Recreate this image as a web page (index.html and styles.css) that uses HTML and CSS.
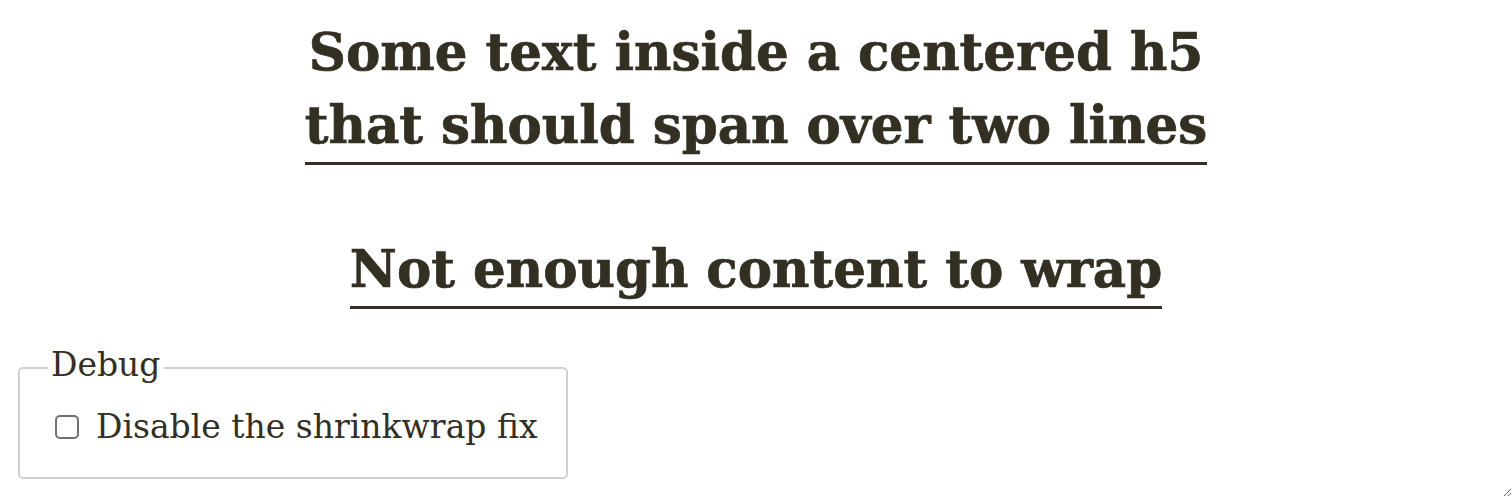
FILE: index.html
```html
<!DOCTYPE html>
<html>
<head>
<meta charset="utf-8">
<link rel="stylesheet" href="styles.css">
</head>
<body>
<div class="frame">
  <h5 class="title">Some text inside a centered h5<br>that should span over two lines</h5>
  <h5 class="title title-short">Not enough content to wrap</h5>
  <fieldset class="debug">
    <legend class="debug-legend">Debug</legend>
    <label class="debug-option"><input type="checkbox" class="debug-check"> Disable the shrinkwrap fix</label>
  </fieldset>
</div>
</body>
</html>
```

FILE: styles.css
```css
html, body {
  margin: 0;
  padding: 0;
  background: #fff;
}
.frame {
  box-sizing: border-box;
  width: 1512px;
  height: 497px;
  overflow: auto;
  resize: both;
  padding: 16px 18px 0 18px;
  color: #332f22;
  font-family: "DejaVu Serif", serif;
}
.title {
  display: table;
  margin: 0 auto 68px auto;
  font-size: 51.5px;
  line-height: 73px;
  font-weight: bold;
  text-align: center;
  border-bottom: 3px solid #332f22;
  padding: 0;
  -webkit-text-stroke: 0.7px #332f22;
}
.title-short {
  margin-bottom: 36px;
}
.debug {
  margin: 0;
  width: 550px;
  box-sizing: border-box;
  border: 2px solid #cfcfcf;
  border-radius: 5px;
  padding: 17px 20px 31px 28px;
}
.debug-legend {
  font-size: 33px;
  padding: 0 3px 6px 3px;
  line-height: normal;
}
.debug-option {
  display: flex;
  align-items: center;
  gap: 17px;
  font-size: 33px;
  padding-left: 7px;
}
.debug-check {
  appearance: none;
  -webkit-appearance: none;
  box-sizing: border-box;
  width: 24px;
  height: 24px;
  margin: 0;
  border: 2px solid #707070;
  border-radius: 5px;
  background: #fff;
}
```
